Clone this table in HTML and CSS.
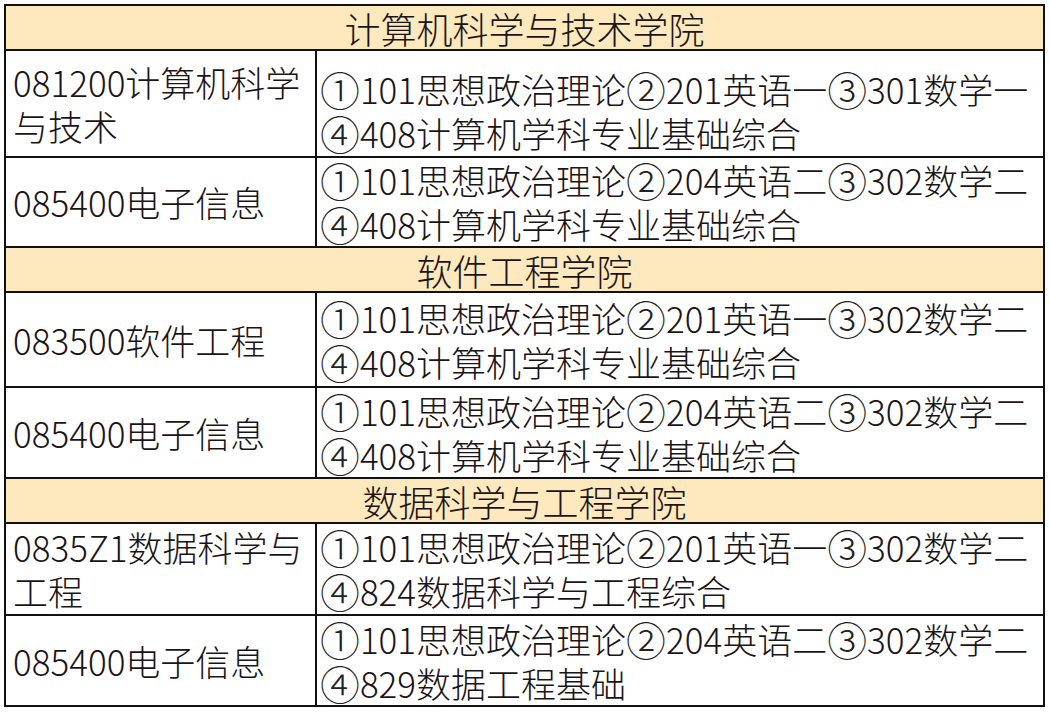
FILE: index.html
```html
<!DOCTYPE html>
<html lang="zh">
<head>
<meta charset="utf-8">
<link rel="stylesheet" href="styles.css">
</head>
<body>
<table class="plan">
  <colgroup><col class="c-major"><col class="c-exam"></colgroup>
  <tr class="head"><td colspan="2">计算机科学与技术学院</td></tr>
  <tr class="r-tall"><td class="major">081200计算机科学与技术</td><td class="exam low"><span class="cn">①</span>101思想政治理论<span class="cn">②</span>201英语一<span class="cn">③</span>301数学一<br><span class="cn">④</span>408计算机学科专业基础综合</td></tr>
  <tr class="r"><td class="major">085400电子信息</td><td class="exam"><span class="cn">①</span>101思想政治理论<span class="cn">②</span>204英语二<span class="cn">③</span>302数学二<br><span class="cn">④</span>408计算机学科专业基础综合</td></tr>
  <tr class="head"><td colspan="2">软件工程学院</td></tr>
  <tr class="r r3"><td class="major">083500软件工程</td><td class="exam"><span class="cn">①</span>101思想政治理论<span class="cn">②</span>201英语一<span class="cn">③</span>302数学二<br><span class="cn">④</span>408计算机学科专业基础综合</td></tr>
  <tr class="r r-plus"><td class="major">085400电子信息</td><td class="exam"><span class="cn">①</span>101思想政治理论<span class="cn">②</span>204英语二<span class="cn">③</span>302数学二<br><span class="cn">④</span>408计算机学科专业基础综合</td></tr>
  <tr class="head"><td colspan="2">数据科学与工程学院</td></tr>
  <tr class="r r5"><td class="major">0835Z1数据科学与工程</td><td class="exam"><span class="cn">①</span>101思想政治理论<span class="cn">②</span>201英语一<span class="cn">③</span>302数学二<br><span class="cn">④</span>824数据科学与工程综合</td></tr>
  <tr class="r r-plus"><td class="major">085400电子信息</td><td class="exam"><span class="cn">①</span>101思想政治理论<span class="cn">②</span>204英语二<span class="cn">③</span>302数学二<br><span class="cn">④</span>829数据工程基础</td></tr>
</table>
</body>
</html>
```
FILE: styles.css
```css
html, body {
  margin: 0;
  padding: 0;
  background: #ffffff;
}
body {
  padding: 4px 0 0 4px;
  font-family: "Noto Sans CJK SC", "Noto Sans", sans-serif;
  font-weight: 300;
  color: #1b1416;
}
.plan {
  border-collapse: collapse;
  width: 1041px;
  table-layout: fixed;
  font-size: 35px;
}
.c-major { width: 311px; }
.plan td {
  border: 2px solid #111;
  padding: 0;
  vertical-align: middle;
}
.head td {
  background: #fde9bd;
  text-align: center;
  height: 43px;
  line-height: 40px;
  font-size: 36px;
}
.major {
  padding-left: 7px !important;
  line-height: 44px;
}
.exam {
  padding-left: 3px !important;
  line-height: 44px;
  white-space: nowrap;
}
.cn {
  font-size: 1.14em;
  line-height: 0;
  vertical-align: -0.04em;
  color: #222;
}
.r-tall td { height: 105px; }
.r-tall td.low {
  height: 91px;
  padding-top: 14px;
}
.r td { height: 88px; }
.r-plus td { height: 89px; }
.r3 td { height: 93px; }
.r5 td { height: 90px; }
```
